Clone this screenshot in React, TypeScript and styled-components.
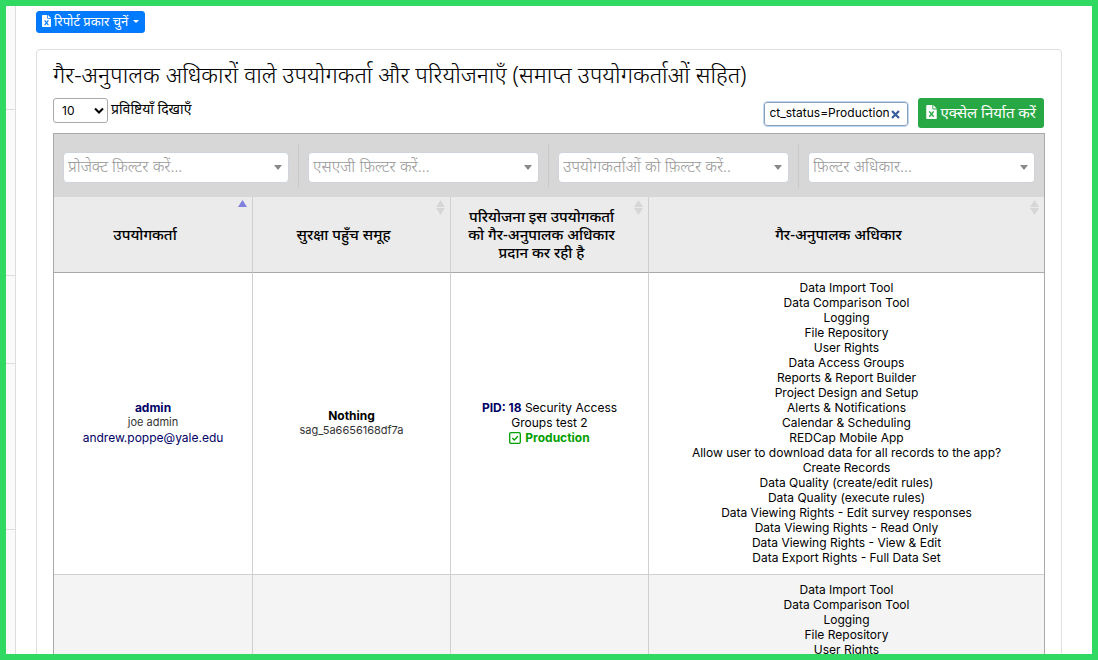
import React from "react";
import styled, { createGlobalStyle } from "styled-components";

const GlobalStyle = createGlobalStyle`
  *, *::before, *::after { box-sizing: border-box; }
  body {
    margin: 0;
    background: #fff;
    color: #000;
    font-family: Inter, "Noto Sans", "Noto Sans Devanagari", sans-serif;
    font-size: 12px;
    line-height: 15px;
  }
  button, input, select { font: inherit; color: inherit; }
`;

const hindi = `"Noto Sans", "Noto Sans Devanagari", sans-serif`;

const Frame = styled.div`
  display: flex;
  height: 100vh;
  border: 6px solid #30d961;
  overflow: hidden;
`;

const Rail = styled.aside`
  flex: 0 0 10px;
  background: #fafafa;
  border-right: 1px solid #ddd;
`;

const RailSection = styled.div<{ $height: number }>`
  height: ${(p) => p.$height}px;
  border-bottom: 1px solid #ddd;
`;

const Main = styled.main`
  flex: 1;
  min-width: 0;
  padding: 5px 30px 0 20px;
`;

const ReportButton = styled.button`
  display: flex;
  align-items: center;
  gap: 3px;
  height: 22px;
  margin-bottom: 16px;
  padding: 0 5px 3px;
  border: 1px solid #0a78f5;
  border-radius: 3px;
  background: #007bff;
  color: #fff;
  font-family: ${hindi};
  font-size: 13px;
  line-height: 18px;
  white-space: nowrap;
`;

const ButtonCaret = styled.span`
  margin: 2px 0 0 2px;
  border: 3px solid transparent;
  border-top-color: #fff;
  border-bottom: 0;
`;

const Card = styled.section`
  padding: 9px 16px 16px;
  border: 1px solid #dfdfdf;
  border-radius: 4px;
`;

const Title = styled.h1`
  margin: 0;
  font-family: ${hindi};
  font-size: 23px;
  font-weight: 300;
  line-height: 30px;
  white-space: nowrap;
`;

const Toolbar = styled.div`
  display: flex;
  align-items: flex-start;
  gap: 10px;
  padding: 9px 1px 5px 0;
`;

const LengthLabel = styled.label`
  display: flex;
  align-items: flex-start;
  gap: 3px;
  margin-right: auto;
  font-family: ${hindi};
  font-size: 14px;
  line-height: 22px;
`;

const SelectWrap = styled.span`
  position: relative;
  display: flex;
`;

const LengthSelect = styled.select`
  appearance: none;
  width: 55px;
  height: 25px;
  padding: 0 8px;
  border: 1px solid #aaa;
  border-radius: 3px;
  background: #fff;
  font-family: Inter, sans-serif;
  font-size: 12px;
`;

const Chevron = styled.svg`
  position: absolute;
  top: 9px;
  right: 4px;
  pointer-events: none;
`;

const SearchBox = styled.div`
  position: relative;
  margin-top: 4px;
`;

const SearchInput = styled.input`
  display: block;
  width: 144px;
  height: 24px;
  padding: 0 18px 3px 5px;
  border: 1px solid #8f9db0;
  border-radius: 3px;
  outline: 1px solid #bcd8f8;
  background: #fff;
`;

const ClearButton = styled.button`
  position: absolute;
  top: 8px;
  right: 8px;
  display: flex;
  padding: 0;
  border: 0;
  background: none;
`;

const ExportButton = styled.button`
  display: flex;
  align-items: center;
  gap: 4px;
  height: 30px;
  padding: 0 8px 3px;
  border: 0;
  border-radius: 3px;
  background: #28a745;
  color: #fff;
  font-family: ${hindi};
  font-size: 15px;
  line-height: 24px;
  white-space: nowrap;
`;

const TablePanel = styled.div`
  border: 1px solid #aaa;
`;

const Filters = styled.div`
  display: grid;
  grid-template-columns: 244fr 250fr 250fr 246fr;
  padding: 10px 0 9px;
  background: #d7d7d7;
`;

const FilterCell = styled.div`
  display: flex;
  align-items: center;
  min-width: 0;
  height: 44px;
  padding: 2px 9px 0;
  & + & { border-left: 1px solid #c9c9c9; }
`;

const FilterBox = styled.div`
  position: relative;
  flex: 1;
  min-width: 0;
  &::after {
    content: "";
    position: absolute;
    top: 13px;
    right: 7px;
    border: 4px solid transparent;
    border-top: 5px solid #888;
    border-bottom: 0;
    pointer-events: none;
  }
`;

const FilterSelect = styled.select`
  appearance: none;
  display: block;
  width: 100%;
  height: 31px;
  padding: 0 20px 2px 4px;
  border: 1px solid #ced4da;
  border-radius: 4px;
  background: #fff;
  color: #999;
  font-family: ${hindi};
  font-size: 16px;
  font-weight: 300;
  line-height: 27px;
`;

const Table = styled.table`
  width: 100%;
  table-layout: fixed;
  border-collapse: separate;
  border-spacing: 0;
  text-align: center;
`;

const HeadCell = styled.th<{ $wide?: boolean }>`
  position: relative;
  width: ${(p) => (p.$wide ? "40%" : "20%")};
  height: 76px;
  padding: 0;
  background: #ebebeb;
  border-bottom: 1px solid #aaa;
  & + & { border-left: 1px solid #d0d0d0; }
`;

const SortButton = styled.button`
  width: 100%;
  padding: 9px 26px 11px 10px;
  border: 0;
  background: none;
  font-family: ${hindi};
  font-size: 15px;
  font-weight: 500;
  line-height: 18px;
`;

const SortIcon = styled.svg`
  position: absolute;
  top: 2px;
  right: 5px;
`;

const Row = styled.tr`
  &:nth-child(even) { background: #f4f4f4; }
`;

const Cell = styled.td`
  padding: 7px 10px 9px;
  border-bottom: 1px solid #d0d0d0;
  vertical-align: middle;
  & + & { border-left: 1px solid #d0d0d0; }
`;

const Strong = styled.strong`
  color: #000066;
  font-weight: 700;
`;

const Group = styled.strong`
  font-weight: 700;
`;

const Small = styled.div`
  color: #333;
  font-size: 11px;
`;

const Mail = styled.a`
  color: #000066;
  text-decoration: none;
`;

const Project = styled.div`
  padding: 0 16px;
`;

const Status = styled.div`
  display: flex;
  align-items: center;
  justify-content: center;
  gap: 4px;
  color: #00a000;
  font-weight: 700;
`;

const RightsList = styled.ul`
  margin: 0;
  padding: 0;
  list-style: none;
`;

const ExcelIcon = ({ size, mark }: { size: number; mark: string }) => (
  <svg width={Math.round(size * 0.75)} height={size} viewBox="0 0 12 16" aria-hidden="true">
    <path fill="#fff" d="M1 0h6v4.3c0 .4.3.7.7.7H12v10c0 .6-.4 1-1 1H1c-.6 0-1-.4-1-1V1c0-.6.4-1 1-1zM8 0l4 4H8z" />
    <path fill="none" stroke={mark} strokeWidth="1.6" d="M3.5 7.3l5 6.2M8.5 7.3l-5 6.2" />
  </svg>
);

const filters = ["प्रोजेक्ट फ़िल्टर करें...", "एसएजी फ़िल्टर करें...", "उपयोगकर्ताओं को फ़िल्टर करें..", "फ़िल्टर अधिकार..."];

const columns = ["उपयोगकर्ता", "सुरक्षा पहुँच समूह", "परियोजना इस उपयोगकर्ता को गैर-अनुपालक अधिकार प्रदान कर रही है", "गैर-अनुपालक अधिकार"];

const rights = [
  "Data Import Tool",
  "Data Comparison Tool",
  "Logging",
  "File Repository",
  "User Rights",
  "Data Access Groups",
  "Reports & Report Builder",
  "Project Design and Setup",
  "Alerts & Notifications",
  "Calendar & Scheduling",
  "REDCap Mobile App",
  "Allow user to download data for all records to the app?",
  "Create Records",
  "Data Quality (create/edit rules)",
  "Data Quality (execute rules)",
  "Data Viewing Rights - Edit survey responses",
  "Data Viewing Rights - Read Only",
  "Data Viewing Rights - View & Edit",
  "Data Export Rights - Full Data Set",
];

const Rights = () => (
  <RightsList>
    {rights.map((r) => (
      <li key={r}>{r}</li>
    ))}
  </RightsList>
);

export default function App() {
  return (
    <Frame>
      <GlobalStyle />
      <Rail>
        {[104, 166, 88, 166].map((h, i) => (
          <RailSection key={i} $height={h} />
        ))}
      </Rail>
      <Main>
        <ReportButton type="button">
          <ExcelIcon size={12} mark="#007bff" />
          रिपोर्ट प्रकार चुनें
          <ButtonCaret />
        </ReportButton>
        <Card>
          <Title>गैर-अनुपालक अधिकारों वाले उपयोगकर्ता और परियोजनाएँ (समाप्त उपयोगकर्ताओं सहित)</Title>
          <Toolbar>
            <LengthLabel>
              <SelectWrap>
                <LengthSelect defaultValue="10">
                  <option>10</option>
                </LengthSelect>
                <Chevron width="10" height="8" viewBox="0 0 10 8">
                  <path d="M1 1.5l4 4 4-4" fill="none" stroke="#000" strokeWidth="2" />
                </Chevron>
              </SelectWrap>
              प्रविष्टियाँ दिखाएँ
            </LengthLabel>
            <SearchBox>
              <SearchInput type="text" aria-label="Search" defaultValue="ct_status=Production" />
              <ClearButton type="button" aria-label="Clear">
                <svg width="9" height="9" viewBox="0 0 9 9">
                  <path d="M1 1l7 7M8 1L1 8" stroke="#3a5f9c" strokeWidth="2.2" />
                </svg>
              </ClearButton>
            </SearchBox>
            <ExportButton type="button">
              <ExcelIcon size={14} mark="#28a745" />
              एक्सेल निर्यात करें
            </ExportButton>
          </Toolbar>
          <TablePanel>
            <Filters>
              {filters.map((f) => (
                <FilterCell key={f}>
                  <FilterBox>
                    <FilterSelect aria-label={f}>
                      <option>{f}</option>
                    </FilterSelect>
                  </FilterBox>
                </FilterCell>
              ))}
            </Filters>
            <Table>
              <thead>
                <tr>
                  {columns.map((c, i) => (
                    <HeadCell key={c} $wide={i === 3} scope="col">
                      <SortButton type="button">{c}</SortButton>
                      <SortIcon width="9" height="16" viewBox="0 0 9 16" aria-hidden="true">
                        <path d="M0 8l4.5-7L9 8z" fill={i === 0 ? "#7f7fdf" : "#d6d6d6"} />
                        {i > 0 && <path d="M0 9h9l-4.5 7z" fill="#d6d6d6" />}
                      </SortIcon>
                    </HeadCell>
                  ))}
                </tr>
              </thead>
              <tbody>
                <Row>
                  <Cell>
                    <Strong>admin</Strong>
                    <Small>joe admin</Small>
                    <Mail href="mailto:andrew.poppe@yale.edu">andrew.poppe@yale.edu</Mail>
                  </Cell>
                  <Cell>
                    <Group>Nothing</Group>
                    <Small>sag_5a6656168df7a</Small>
                  </Cell>
                  <Cell>
                    <Project>
                      <Strong>PID: 18</Strong> Security Access Groups test 2
                    </Project>
                    <Status>
                      <svg width="12" height="12" viewBox="0 0 12 12" aria-hidden="true">
                        <rect x=".7" y=".7" width="10.6" height="10.6" rx="1.2" fill="none" stroke="#00a000" strokeWidth="1.3" />
                        <path d="M3.3 6l2 2 3.6-3.8" fill="none" stroke="#00a000" strokeWidth="1.3" />
                      </svg>
                      Production
                    </Status>
                  </Cell>
                  <Cell><Rights /></Cell>
                </Row>
                <Row>
                  <Cell />
                  <Cell />
                  <Cell />
                  <Cell><Rights /></Cell>
                </Row>
              </tbody>
            </Table>
          </TablePanel>
        </Card>
      </Main>
    </Frame>
  );
}
